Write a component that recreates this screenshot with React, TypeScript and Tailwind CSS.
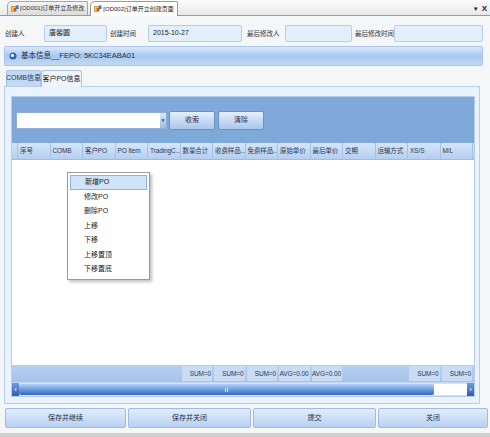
const cols = ["序号", "COMB", "客户PO", "PO Item", "TradingC...", "数量合计", "收费样品...", "免费样品...", "原始单价", "最后单价", "交期", "运输方式", "XS/S", "M/L"];
const sums = ["", "", "", "", "", "SUM=0", "SUM=0", "SUM=0", "AVG=0.00", "AVG=0.00", "", "", "SUM=0", "SUM=0"];
const menu = ["新增PO", "修改PO", "删除PO", "上移", "下移", "上移置顶", "下移置底"];

function TabIcon() {
  return (
    <svg width="8" height="8" viewBox="0 0 9 9" className="shrink-0">
      <rect x="0.5" y="1.5" width="5" height="6" fill="#f6c343" stroke="#b07a10" strokeWidth="0.6" />
      <rect x="3" y="3.5" width="3" height="3" fill="#e0402c" />
      <rect x="5.5" y="0.5" width="3" height="4" fill="#3b78d4" />
    </svg>
  );
}

function Field({ label, labelW, inputW, value }: { label: string; labelW: string; inputW: string; value?: string }) {
  return (
    <div className="flex items-center">
      <span className={`${labelW} text-[6.5px] text-[#333] pl-[1px] whitespace-nowrap`}>{label}</span>
      <div className={`${inputW} h-[17px] bg-[#e3effd] border border-[#b3cdee] rounded-[2px] flex items-center px-[4px] text-[7px] text-[#222]`}>
        {value}
      </div>
    </div>
  );
}

export default function App() {
  return (
    <div
      className="w-[490px] h-[437px] bg-[#f5f6f7] flex flex-col overflow-hidden relative"
      style={{ fontFamily: '"Liberation Sans", "Noto Sans CJK SC", sans-serif' }}
    >
      {/* Document tabs */}
      <div className="h-[16px] shrink-0 bg-gradient-to-b from-[#fbfbfb] to-[#e9e9e9] border-b border-[#9a9a9a] flex items-end pl-[7px] relative">
        <div className="h-[14px] flex items-center gap-[1px] pl-[3px] pr-[3px] bg-gradient-to-b from-[#f3f3f3] to-[#dcdcdc] border border-b-0 border-[#a5a5a5] rounded-tl-[5px] rounded-tr-[2px] text-[6px] text-[#333] whitespace-nowrap">
          <TabIcon />
          <span>[OD001]订单开立及修改</span>
        </div>
        <div className="h-[15px] ml-[2px] flex items-center gap-[1px] pl-[3px] pr-[3px] bg-white border border-b-0 border-[#9a9a9a] rounded-tl-[5px] rounded-tr-[2px] text-[6px] text-[#222] whitespace-nowrap -mb-[1px]">
          <TabIcon />
          <span>[OD002]订单开立创建页面</span>
        </div>
        <div className="absolute right-[3px] top-[3px] flex items-center gap-[3px] text-[8px] text-[#222]">
          <span className="text-[6px]">▼</span>
          <span className="font-bold">X</span>
        </div>
      </div>

      <div className="flex-1 flex min-h-0">
        <div className="w-[2px] bg-[#cfcfcf]" />
        <div className="flex-1 flex flex-col pl-[4px] pr-[2px]">
          {/* Header fields */}
          <div className="flex items-center mt-[9px] h-[17px]">
            <Field label="创建人" labelW="w-[40px]" inputW="w-[63px]" value="唐馨圆" />
            <div className="w-[2px]" />
            <Field label="创建时间" labelW="w-[39px]" inputW="w-[94px]" value="2015-10-27" />
            <div className="w-[4px]" />
            <Field label="最后修改人" labelW="w-[39px]" inputW="w-[67px]" />
            <div className="w-[2px]" />
            <Field label="最后修改时间" labelW="w-[40px]" inputW="w-[89px]" />
          </div>

          {/* Section bar */}
          <div className="mt-[4px] h-[20px] w-[479px] rounded-[2px] border border-[#a9c7ec] bg-gradient-to-b from-[#dbe9fa] via-[#a8c8ef] to-[#c3d9f4] flex items-center pl-[4px] gap-[4px]">
            <svg width="8" height="8" viewBox="0 0 8 8">
              <circle cx="4" cy="4" r="3.5" fill="#2d62b0" />
              <circle cx="3.5" cy="3.5" r="1.6" fill="#ffffff" />
            </svg>
            <span className="text-[7.5px] text-[#1e2f4d]">基本信息__FEPO: 5KC34EABA01</span>
          </div>

          {/* Inner tabs */}
          <div className="mt-[3px] h-[17px] flex items-end pl-[2px]">
            <div className="h-[16px] w-[35px] flex items-center justify-center bg-[#c3d8f2] border border-b-0 border-[#a8c4e8] rounded-t-[2px] text-[7px] text-[#2a3a55] whitespace-nowrap">
              COMB信息
            </div>
            <div className="h-[17px] w-[41px] flex items-center justify-center bg-[#eef5fd] border border-b-0 border-[#a8c4e8] rounded-t-[3px] text-[7px] text-[#222] whitespace-nowrap -mb-[1px] relative">
              客户PO信息
            </div>
          </div>

          {/* Tab page */}
          <div className="w-[476px] h-[318px] border border-[#b6cfee] bg-[#eaf2fc] pt-[9px] pl-[6px] pr-[3px] pb-[6px]">
            <div className="w-[464px] h-[301px] border border-[#b5cdec] flex flex-col bg-white">
              {/* toolbar */}
              <div className="h-[46px] bg-[#7fa9d9] flex items-center pl-[4px] gap-[2px]">
                <div className="w-[151px] h-[17px] bg-white border border-[#8eafd8] flex justify-end">
                  <div className="w-[6px] h-full bg-gradient-to-b from-[#dbe8f8] to-[#9dbde6] flex items-center justify-center">
                    <span className="text-[5px] text-[#1f4f94] leading-none">▼</span>
                  </div>
                </div>
                <div className="w-[46px] h-[19px] rounded-[2px] border border-[#6a92c6] bg-gradient-to-b from-[#e4eefb] to-[#aac7ec] flex items-center justify-center text-[7px] text-[#1e2f4d]">
                  收索
                </div>
                <div className="w-[46px] h-[19px] ml-[1px] rounded-[2px] border border-[#6a92c6] bg-gradient-to-b from-[#e4eefb] to-[#aac7ec] flex items-center justify-center text-[7px] text-[#1e2f4d]">
                  清除
                </div>
              </div>

              {/* header */}
              <div className="h-[17px] grid grid-cols-[6px_repeat(14,minmax(0,1fr))_1px] bg-gradient-to-b from-[#d6e5f8] to-[#b5cff0] border-b border-[#9dbbe3]">
                <div className="border-r border-[#a5c1e6]" />
                {cols.map((c) => (
                  <div key={c} className="border-r border-[#a5c1e6] flex items-center pl-[2px] text-[6.5px] tracking-[-0.1px] text-[#2b3a55] whitespace-nowrap overflow-hidden">
                    {c}
                  </div>
                ))}
                <div />
              </div>

              {/* body */}
              <div className="flex-1 bg-white" />

              {/* summary */}
              <div className="h-[17px] grid grid-cols-[6px_repeat(14,minmax(0,1fr))_1px] bg-gradient-to-b from-[#b7d0f0] to-[#a5c3ea] items-center">
                <div />
                {sums.map((s, i) => (
                  <div key={i} className="px-[1px] h-[15px]">
                    {s && (
                      <div className="h-full bg-[#cadcf3] flex items-center justify-end pr-[1px] text-[6.5px] tracking-[-0.1px] text-[#2b3a55] whitespace-nowrap">
                        {s}
                      </div>
                    )}
                  </div>
                ))}
                <div />
              </div>

              {/* horizontal scrollbar */}
              <div className="h-[14px] flex items-stretch bg-[#d5e3f5] border-t border-[#c0d5ef]">
                <div className="w-[7px] bg-gradient-to-b from-[#6f9be0] to-[#2c5db4] flex items-center justify-center text-[8px] text-white leading-none">‹</div>
                <div className="flex-1 flex items-stretch py-[1px]">
                  <div className="w-[415px] rounded-[2px] bg-gradient-to-b from-[#b4d0f2] via-[#6f9de0] to-[#3567b8] flex items-center justify-center">
                    <div className="w-[3px] h-[4px] border-x border-[#d8e6f8]" />
                  </div>
                  <div className="flex-1 bg-white" />
                </div>
                <div className="w-[7px] bg-gradient-to-b from-[#6f9be0] to-[#2c5db4] flex items-center justify-center text-[8px] text-white leading-none">›</div>
              </div>
            </div>
          </div>

          {/* bottom buttons */}
          <div className="mt-[4px] h-[20px] flex gap-[2px] pl-[1px]">
            {[["保存并继续", "w-[121px]"], ["保存并关闭", "w-[123px]"], ["提交", "w-[123px]"], ["关闭", "w-[110px]"]].map(([t, w]) => (
              <div key={t} className={`${w} h-full rounded-[2px] border border-[#9dbce4] bg-gradient-to-b from-[#e2edfb] to-[#b8d1f1] flex items-center justify-center text-[7px] text-[#1e2f4d]`}>
                {t}
              </div>
            ))}
          </div>
          <div className="flex-1" />
          <div className="h-[4px] -ml-[6px] -mr-[2px] bg-[#cfcfcf]" />
        </div>
        <div className="w-[6px] bg-[#ebebeb] border-l border-[#d6d6d6] flex items-center justify-center">
          <div className="w-[1px] h-[4px] bg-[#9a9a9a]" />
        </div>
      </div>

      {/* context menu */}
      <div className="absolute left-[67px] top-[172px] w-[83px] h-[108px] bg-white border border-[#9b9b9b] shadow-[2px_2px_3px_rgba(0,0,0,0.25)] pt-[2px] px-[2px]">
        {menu.map((m, i) => (
          <div
            key={m}
            className={`h-[14.5px] flex items-center pl-[14px] text-[7px] text-[#222] ${i === 0 ? "bg-[#cfe3fb] border border-[#8cb3e6]" : ""}`}
          >
            {m}
          </div>
        ))}
      </div>
    </div>
  );
}
